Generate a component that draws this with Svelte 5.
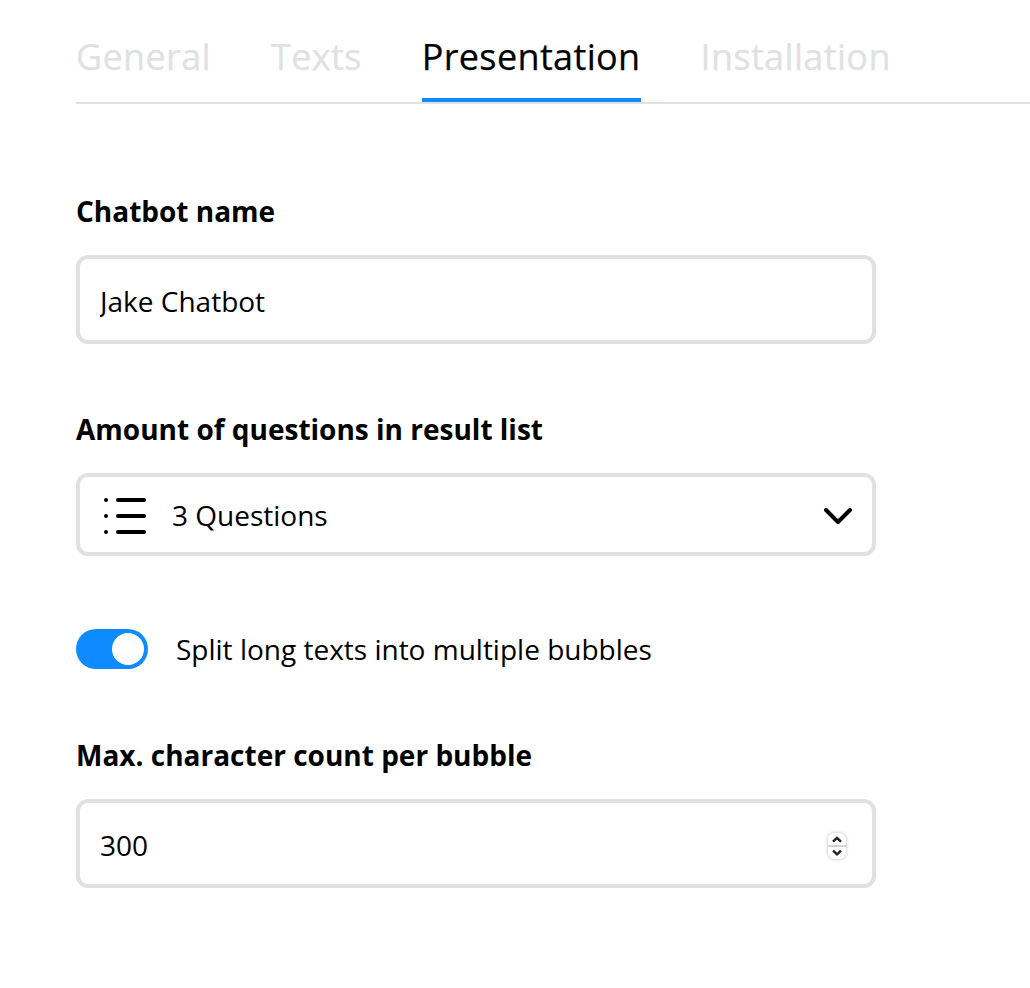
<script>
  const tabs = ['General', 'Texts', 'Presentation', 'Installation'];
  const active = 'Presentation';
</script>

<main>
  <nav>
    {#each tabs as tab}
      <span class="tab" class:active={tab === active}>{tab}</span>
    {/each}
  </nav>
  <section class="field name">
    <h2>Chatbot name</h2>
    <div class="box"><span class="value">Jake Chatbot</span></div>
  </section>
  <section class="field amount">
    <h2>Amount of questions in result list</h2>
    <div class="box select">
      <svg class="list" width="44" height="40" viewBox="0 0 44 40">
        <path d="M16 4H42M16 20H42M16 36H42" stroke="#000" stroke-width="4" stroke-linecap="round" />
        <path d="M4 4h.01M4 20h.01M4 36h.01" stroke="#000" stroke-width="4" stroke-linecap="round" />
      </svg>
      <span class="value">3 Questions</span>
      <svg class="chevron" width="30" height="20" viewBox="0 0 30 20">
        <path d="M3 4L15 16L27 4" fill="none" stroke="#000" stroke-width="4" stroke-linecap="round" stroke-linejoin="round" />
      </svg>
    </div>
  </section>
  <div class="switch">
    <span class="track"><span class="knob"></span></span>
    <span>Split long texts into multiple bubbles</span>
  </div>
  <section class="field">
    <h2>Max. character count per bubble</h2>
    <div class="box number">
      <span class="value">300</span>
      <span class="stepper">
        <svg width="18" height="26" viewBox="0 0 18 26">
          <path d="M0 13H18" stroke="#d4d4d4" stroke-width="2" />
          <path d="M5 8.6L9 4.8L13 8.6M5 17.6L9 21.4L13 17.6" fill="none" stroke="#222" stroke-width="2.4" />
        </svg>
      </span>
    </div>
  </section>
</main>

<style>
  :global(body) { margin: 0; background: #fff; overflow: hidden; }
  main {
    box-sizing: border-box;
    height: 988px;
    padding-left: 76px;
    font-family: 'Open Sans', sans-serif;
    font-size: 28px;
    line-height: 38px;
    color: #000;
    white-space: nowrap;
  }
  nav {
    display: flex;
    gap: 60px;
    box-sizing: border-box;
    height: 104px;
    border-bottom: 2px solid #e0e1e2;
    margin-bottom: 88px;
  }
  .tab {
    box-sizing: border-box;
    height: 102px;
    padding-top: 32px;
    font-size: 36px;
    line-height: 50px;
    letter-spacing: 0.36px;
    -webkit-text-stroke: 0.25px currentColor;
    color: #e0e1e2;
  }
  .active { color: #000; border-bottom: 4px solid #0d8bff; }
  h2 { margin: 0 0 25px; font-size: 28px; line-height: 38px; font-weight: 700; }
  .box {
    display: flex;
    align-items: center;
    box-sizing: border-box;
    width: 800px;
    height: 89px;
    padding: 2px 20px 0;
    border: 4px solid #e0e1e2;
    border-radius: 12px;
  }
  .value { overflow: hidden; }
  .name { margin-bottom: 66px; }
  .select { height: 83px; padding: 0 19px 0 22px; }
  .list { margin: 2px 26px 0 0; }
  .chevron { margin: 2px 0 0 auto; }
  .switch { display: flex; align-items: center; height: 40px; margin: 73px 0 67px; gap: 28px; }
  .track { display: flex; justify-content: flex-end; box-sizing: border-box; width: 72px; height: 40px; padding: 4px; border-radius: 20px; background: #0d8bff; }
  .knob { width: 32px; height: 32px; border-radius: 50%; background: #fff; }
  .stepper {
    display: flex;
    width: 18px;
    height: 26px;
    margin: 2px 6px 0 auto;
    border-radius: 6px;
    background: #fff;
    box-shadow: 0 0 3px 0.5px rgba(0, 0, 0, 0.22);
  }
</style>
